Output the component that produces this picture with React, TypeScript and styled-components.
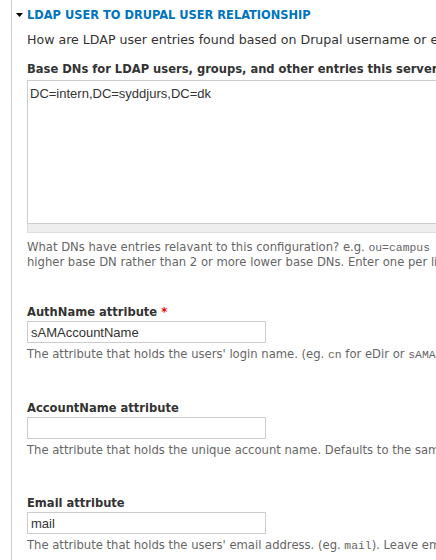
import React from "react";
import styled, { createGlobalStyle } from "styled-components";

const GlobalStyle = createGlobalStyle`
  html, body {
    margin: 0;
    padding: 0;
    background: #fff;
    overflow: hidden;
  }
  body {
    font-family: "DejaVu Sans", Verdana, sans-serif;
    font-size: 12.6px;
    color: #333;
  }
`;

const Fieldset = styled.div`
  margin-left: 11px;
  width: 1400px;
  min-height: 560px;
  border-left: 1px solid #ccc;
  padding-top: 5px;
`;

const Legend = styled.div`
  display: flex;
  align-items: center;
  height: 18px;
  padding-left: 4px;
`;

const Caret = styled.svg`
  width: 7px;
  height: 4px;
  margin-right: 4px;
  margin-top: 1px;
`;

const LegendLink = styled.a`
  font-weight: bold;
  font-size: 12.7px;
  font-stretch: semi-condensed;
  text-transform: uppercase;
  color: #0074bd;
  text-decoration: none;
  white-space: nowrap;
`;

const Body = styled.div`
  padding-left: 15px;
`;

const Intro = styled.p`
  margin: 8px 0 0;
  line-height: 18px;
  white-space: nowrap;
`;

const FormItem = styled.div<{ $gap: number }>`
  margin-top: ${({ $gap }) => $gap}px;
`;

const Label = styled.label<{ $tight?: boolean }>`
  display: block;
  font-weight: bold;
  font-size: 12.8px;
  font-stretch: semi-condensed;
  line-height: 18px;
  white-space: nowrap;
  margin-bottom: ${({ $tight }) => ($tight ? 0 : 2)}px;
`;

const Required = styled.span`
  color: #e00;
`;

const TextareaWrap = styled.div`
  width: 560px;
`;

const Textarea = styled.textarea`
  display: block;
  box-sizing: border-box;
  width: 100%;
  height: 143px;
  margin: 0;
  padding: 5px 2px;
  border: 1px solid #ccc;
  border-bottom: none;
  font-family: "Liberation Sans", Arial, sans-serif;
  font-size: 13px;
  color: #333;
  resize: none;
  outline: none;
`;

const Grippie = styled.div`
  box-sizing: border-box;
  height: 10px;
  background: #eee;
  border: 1px solid #ddd;
  border-top-color: #ccc;
`;

const Input = styled.input`
  display: block;
  box-sizing: border-box;
  width: 239px;
  height: 22px;
  margin: 0;
  padding: 2px 3px;
  border: 1px solid #ccc;
  font-family: "Liberation Sans", Arial, sans-serif;
  font-size: 13px;
  color: #333;
  outline: none;
`;

const Description = styled.div<{ $top: number }>`
  margin-top: ${({ $top }) => $top}px;
  font-size: 11.6px;
  line-height: 14px;
  color: #666;
  white-space: nowrap;
`;

const Code = styled.code`
  font-family: "Liberation Mono", "Courier New", monospace;
  font-size: 11.4px;
`;

type Field = {
  label: string;
  required?: boolean;
  value: string;
  description: React.ReactNode;
};

const fields: Field[] = [
  {
    label: "AuthName attribute",
    required: true,
    value: "sAMAccountName",
    description: (
      <>
        The attribute that holds the users' login name. (eg. <Code>cn</Code> for eDir or{" "}
        <Code>sAMAccountName</Code> for Active Directory).
      </>
    ),
  },
  {
    label: "AccountName attribute",
    value: "",
    description:
      "The attribute that holds the unique account name. Defaults to the same as the AuthName attribute.",
  },
  {
    label: "Email attribute",
    value: "mail",
    description: (
      <>
        The attribute that holds the users' email address. (eg. <Code>mail</Code>). Leave empty if
        no email address attribute exists.
      </>
    ),
  },
];

const App = () => {
  return (
    <>
      <GlobalStyle />
      <Fieldset>
        <Legend>
          <Caret viewBox="0 0 7 4">
            <path d="M0 0h7L3.5 4z" fill="#000" />
          </Caret>
          <LegendLink href="#">LDAP User to Drupal User Relationship</LegendLink>
        </Legend>
        <Body>
          <Intro>
            How are LDAP user entries found based on Drupal username or email? And vice-versa?
            Needed for LDAP Authentication and Authorization functionality.
          </Intro>

          <FormItem $gap={11}>
            <Label>Base DNs for LDAP users, groups, and other entries this server should look in.</Label>
            <TextareaWrap>
              <Textarea defaultValue="DC=intern,DC=syddjurs,DC=dk" />
              <Grippie />
            </TextareaWrap>
            <Description $top={7}>
              What DNs have entries relavant to this configuration? e.g. <Code>ou=campus accounts,dc=ad,dc=uiuc,dc=edu</Code>{" "}
              Keep in mind that every additional basedn likely doubles the number of queries. Place the more
              heavily used one first and consider using one
              <br />
              higher base DN rather than 2 or more lower base DNs. Enter one per line in case if you need more than one.
            </Description>
          </FormItem>

          {fields.map((f, i) => (
            <FormItem key={f.label} $gap={i === 0 ? 34 : 37}>
              <Label $tight>
                {f.label} {f.required && <Required>*</Required>}
              </Label>
              <Input defaultValue={f.value} />
              <Description $top={4}>{f.description}</Description>
            </FormItem>
          ))}
        </Body>
      </Fieldset>
    </>
  );
};

export default App;
